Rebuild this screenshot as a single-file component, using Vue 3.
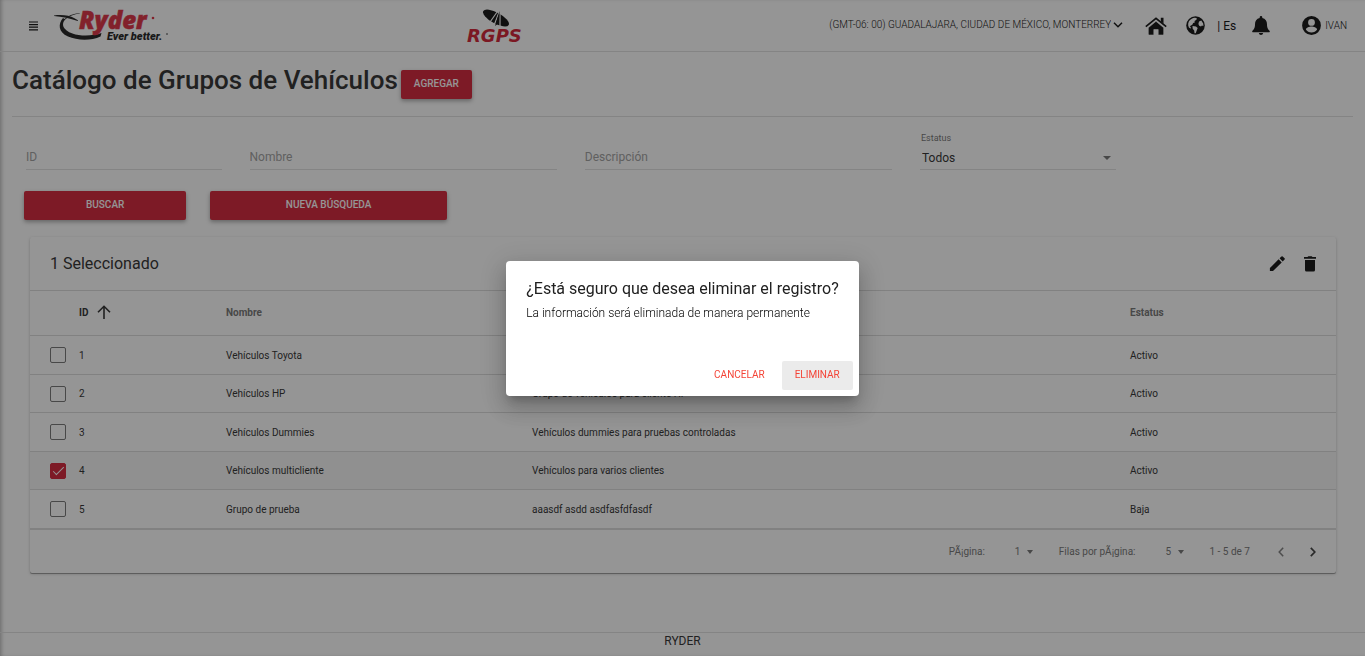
<script setup>
import { ref } from 'vue'

const rows = ref([
  { id: 1, name: 'Vehículos Toyota', description: 'Grupo de vehículos Toyota', status: 'Activo', selected: false },
  { id: 2, name: 'Vehículos HP', description: 'Grupo de vehículos para cliente HP', status: 'Activo', selected: false },
  { id: 3, name: 'Vehículos Dummies', description: 'Vehículos dummies para pruebas controladas', status: 'Activo', selected: false },
  { id: 4, name: 'Vehículos multicliente', description: 'Vehículos para varios clientes', status: 'Activo', selected: true },
  { id: 5, name: 'Grupo de prueba', description: 'aaasdf asdd asdfasfdfasdf', status: 'Baja', selected: false },
])
const filters = ref({ id: '', name: '', description: '' })
</script>

<template>
  <div class="page">
    <header class="topbar">
      <button class="icon-btn menu" aria-label="Menú">
        <svg width="10" height="10" viewBox="0 0 10 10"><path d="M0 1h9M0 3.600h9M0 6.200h9M0 8.800h9" stroke="#000" stroke-width="1.200" /></svg>
      </button>
      <svg class="ryder" width="118" height="34" viewBox="0 0 118 34" role="img" aria-label="Ryder Ever better">
        <path d="M0 6.500C8 5.500 16 6.500 20 9l4 2.200-.3.700C16 9.500 8 7.800 0 7z" fill="#111" />
        <path d="M26 4C19 4.500 14 6.500 10.500 10l-1.500-1C4 15 4 23 14 27.500c9 4 23 4.500 32.500 0l1-3.500c-8 3-21 3.500-29 .5C9 21 6.500 15 11.500 10.200 15 7 20 5.200 25.500 4.500z" fill="#111" />
        <text x="25" y="20" class="ryder-name">Ryder</text>
        <circle cx="99" cy="9" r="1.300" fill="#da2135" />
        <text x="53" y="31" class="ryder-tag">Ever better.</text>
        <path d="M112 25h2" stroke="#333" stroke-width="1" />
      </svg>
      <svg class="rgps" width="62" height="40" viewBox="0 -3 62 40" role="img" aria-label="RGPS">
        <ellipse cx="31" cy="9" rx="14.500" ry="5.500" transform="rotate(29 31 9)" fill="#000" />
        <path d="M33.500 1 24 14.500M34.500 2 29 16.500M35 2v15" stroke="#fff" stroke-width="1.200" fill="none" />
        <path d="M34.500 2 30 17l4-3z" fill="#000" />
        <text x="2" y="33" class="rgps-name">RGPS</text>
      </svg>
      <div class="tools">
        <div class="zone">
          <select aria-label="Zona horaria"><option>(GMT-06: 00) GUADALAJARA, CIUDAD DE MÉXICO, MONTERREY</option></select>
          <svg width="10" height="6" viewBox="0 0 10 6"><path d="M1 .8 5 4.800 9 .8" fill="none" stroke="#000" stroke-width="1.500" /></svg>
        </div>
        <a href="#" class="home" aria-label="Inicio">
          <svg width="22" height="18" viewBox="0 0 22 18"><path d="M11 4.300 3.300 10.700V17q0 1 1 1h4.500v-5.500h4.400V18h4.500q1 0 1-1v-6.300z" stroke="#fff" stroke-width=".6" /><path d="m.8 9.600L11 1.300l10.200 8.300" fill="none" stroke="#000" stroke-width="1.700" /><path d="M15.800.8h2.700v6l-2.700-2.200z" /></svg>
        </a>
        <a href="#" class="lang">
          <svg width="19" height="19" viewBox="0 0 19 19"><circle cx="9.500" cy="9.500" r="9.300" /><path d="M8.600 1.700 10.700 2l-.2 1.800-2 1.300.3 1.400-1.700.6-.6 1.500-1.500.8-1.300.9.500.3.800 1.500-.5.500-1.600-1C1.600 8.500 2 6 4 4c1.300-1.300 2.900-2 4.600-2.300z" fill="#fff" /><path d="M6.500 9.900 10 10.500l1.700 1.400-.8 2-1.200 3.300H8.500l-.3-2.700-1.500-1.800z" fill="#fff" /><path d="m13 5.600 2.300-1.100 1.900 3 .2 2.500-1.500-.4-.9 1-1.800-.9-.8-1.800z" fill="#fff" /></svg>
          <span>| Es</span>
        </a>
        <button class="icon-btn bell" aria-label="Notificaciones">
          <svg width="18" height="19" viewBox="0 0 18 19"><path d="M9 0q-1.300 0-1.300 1.300v.8C4.500 2.700 3 5.200 3 8.200c0 4-1.300 5.300-2.500 6.500-.7.700-.3 1.600.7 1.600h15.600c1 0 1.400-.9.700-1.600C16.300 13.500 15 12.200 15 8.200c0-3-1.500-5.500-4.700-6.100v-.8Q10.300 0 9 0zM6.800 17h4.400q-.4 1.900-2.200 1.900T6.800 17z" /></svg>
        </button>
        <button class="icon-btn user">
          <svg width="19" height="19" viewBox="0 0 19 19"><path fill-rule="evenodd" d="M9.500.1a9.400 9.400 0 1 0 0 18.800 9.400 9.400 0 0 0 0-18.800zm0 2.900a3.400 3.400 0 1 1 0 6.800 3.400 3.400 0 0 1 0-6.800zm0 13.400c-2.400 0-4.400-1.200-5.600-3 .1-1.900 3.700-2.900 5.600-2.900s5.500 1 5.600 2.900c-1.200 1.800-3.200 3-5.600 3z" /></svg>
          <span>IVAN</span>
        </button>
      </div>
    </header>

    <main>
      <div class="heading">
        <h1>Catálogo de Grupos de Vehículos</h1>
        <button class="btn raised">AGREGAR</button>
      </div>

      <form @submit.prevent>
        <div class="fields">
          <div class="field"><input id="f-id" v-model="filters.id" type="text" placeholder="ID" aria-label="ID" /></div>
          <div class="field"><input id="f-name" v-model="filters.name" type="text" placeholder="Nombre" aria-label="Nombre" /></div>
          <div class="field"><input id="f-desc" v-model="filters.description" type="text" placeholder="Descripción" aria-label="Descripción" /></div>
          <div class="field">
            <label for="f-status">Estatus</label>
            <div class="pick">
              <select id="f-status"><option>Todos</option></select>
              <svg width="8" height="4" viewBox="0 0 8 4"><path d="M0 0h8L4 4z" /></svg>
            </div>
          </div>
        </div>
        <div class="actions">
          <div><button class="btn raised" type="submit">BUSCAR</button></div>
          <div><button class="btn raised" type="reset">NUEVA BÚSQUEDA</button></div>
        </div>
      </form>

      <section class="card">
        <div class="card-bar">
          <h2>1 Seleccionado</h2>
          <button class="icon-btn" aria-label="Editar">
            <svg width="16" height="16" viewBox="0 0 18 18"><path d="M1 13.500V17h3.500L14.300 7.200l-3.500-3.500zM17.500 4a1 1 0 0 0 0-1.400L15.400.5a1 1 0 0 0-1.400 0l-2.100 2.100 3.500 3.500z" /></svg>
          </button>
          <button class="icon-btn" aria-label="Eliminar registro">
            <svg width="12" height="16" viewBox="0 0 12 16"><path d="M1 4h10v10q0 1.500-1.500 1.500h-7Q1 15.500 1 14zM0 1h3.500l.8-.8h3.400l.8.800H12v1.800H0z" /></svg>
          </button>
        </div>
        <table>
          <colgroup><col class="c-check" /><col class="c-id" /><col class="c-name" /><col class="c-desc" /><col /></colgroup>
          <thead>
            <tr>
              <th></th>
              <th class="sorted"><span>ID<svg width="14" height="14" viewBox="0 0 14 14"><path d="M7 14V1.300M1 7.300l6-6 6 6" fill="none" stroke="#212121" stroke-width="1.600" /></svg></span></th>
              <th>Nombre</th>
              <th>Descripción</th>
              <th>Estatus</th>
            </tr>
          </thead>
          <tbody>
            <tr v-for="row in rows" :key="row.id" :class="{ selected: row.selected }">
              <td><input v-model="row.selected" type="checkbox" :aria-label="'Seleccionar ' + row.name" /></td>
              <td>{{ row.id }}</td>
              <td>{{ row.name }}</td>
              <td>{{ row.description }}</td>
              <td>{{ row.status }}</td>
            </tr>
          </tbody>
        </table>
        <div class="pager">
          <label for="p-page">PÃ¡gina:</label>
          <div class="mini">
            <select id="p-page"><option>1</option></select>
            <svg width="6" height="4" viewBox="0 0 6 4"><path d="M0 0h6L3 4z" /></svg>
          </div>
          <label for="p-rows">Filas por pÃ¡gina:</label>
          <div class="mini">
            <select id="p-rows"><option>5</option></select>
            <svg width="6" height="4" viewBox="0 0 6 4"><path d="M0 0h6L3 4z" /></svg>
          </div>
          <span class="range">1 - 5 de 7</span>
          <button class="icon-btn prev" aria-label="Anterior"><svg width="6" height="10" viewBox="0 0 6 10"><path d="M5.200.8 1.200 5l4 4.200" /></svg></button>
          <button class="icon-btn next" aria-label="Siguiente"><svg width="6" height="10" viewBox="0 0 6 10"><path d="M.8.800 4.800 5l-4 4.200" /></svg></button>
        </div>
      </section>
    </main>

    <footer>RYDER</footer>

    <div class="backdrop">
      <div class="dialog" role="dialog" aria-modal="true" aria-labelledby="dlg-title">
        <h2 id="dlg-title">¿Está seguro que desea eliminar el registro?</h2>
        <p>La información será eliminada de manera permanente</p>
        <div class="dialog-actions">
          <button class="btn flat">CANCELAR</button>
          <button class="btn flat focused">ELIMINAR</button>
        </div>
      </div>
    </div>
  </div>
</template>

<style>
html, body { background: #fff; }
</style>

<style scoped>
.page {
  min-height: 100vh;
  box-sizing: border-box;
  display: flex;
  flex-direction: column;
  font-family: Roboto, "Liberation Sans", sans-serif;
  font-size: 10px;
  color: #212121;
  background: #fff;
  box-shadow: inset 3px 0 4px -2px rgba(0, 0, 0, 0.35);
}
button, select, input { font-family: inherit; font-size: inherit; font-weight: inherit; color: inherit; }
select { appearance: none; border: 0; padding: 0; background: transparent; outline: none; }
h1, h2, p { margin: 0; }
a { color: #000; text-decoration: none; }
svg { display: block; flex: none; overflow: visible; }
.icon-btn { border: 0; padding: 0; background: none; display: flex; align-items: center; }

.topbar {
  display: flex;
  align-items: center;
  height: 51px;
  border-bottom: 1px solid #dfdfdf;
  padding: 0 18px 0 29px;
}
.ryder { margin-left: 15px; }
.ryder-name { font: italic 800 24px "Open Sans", sans-serif; fill: #da2135; stroke: #da2135; stroke-width: 0.5px; }
.ryder-tag { font: italic 900 11px Roboto, sans-serif; fill: #111; }
.rgps { margin-left: 293px; }
.rgps-name { font: italic bold 18px "DejaVu Sans", sans-serif; fill: #ce1126; }
.tools { margin-left: auto; display: flex; align-items: center; color: #000; }
.zone { display: flex; align-items: center; gap: 2px; padding-bottom: 2px; font-weight: 300; }
.zone select { height: 20px; line-height: 20px; }
.home { margin-left: 22px; }
.lang { margin-left: 19px; display: flex; align-items: center; gap: 12px; font-size: 12px; }
.bell { margin-left: 16px; }
.user { margin-left: 32px; gap: 4px; font-weight: 300; }

main { padding: 0 12px; }
.heading {
  display: flex;
  align-items: center;
  gap: 3px;
  height: 64px;
  border-bottom: 1px solid #dfdfdf;
}
h1 { font-size: 26px; font-weight: 500; line-height: 56px; height: 64px; }
.btn {
  height: 29px;
  border: 0;
  border-radius: 2px;
  padding: 0 13px 2px;
  font-size: 10px;
}
.raised { background: #d2142b; color: #fff; font-weight: 500; box-shadow: 0 2px 4px rgba(0, 0, 0, 0.36); }

.fields { display: grid; grid-template-columns: 2fr 3fr 3fr 2fr 2fr; }
.field { padding: 14px 14px 0; height: 39px; display: flex; flex-direction: column; justify-content: flex-end; }
.field input, .pick {
  box-sizing: border-box;
  width: 100%;
  height: 24px;
  border: 0;
  border-bottom: 1px solid #dfdfdf;
  padding: 0 0 2px;
  font-size: 12px;
  background: transparent;
  outline: none;
}
.field input::placeholder { color: #999; opacity: 1; }
.field label { font-size: 9px; line-height: 12px; color: #6b6b6b; padding-left: 1px; margin-bottom: 2px; }
.field .pick { display: flex; align-items: center; padding: 0 5px 0 2px; }
.pick select { flex: 1; font-size: 12px; }
.pick svg, .mini svg { fill: #6b6b6b; }
.actions { display: grid; grid-template-columns: 5fr 7fr 24fr; padding-top: 21px; }
.actions div { padding: 0 12px; }
.actions .btn { width: 100%; }

.card {
  margin: 17px 17px 0 18px;
  border-radius: 2px;
  box-shadow: 0 1px 3px rgba(0, 0, 0, 0.25), 0 1px 0 rgba(0, 0, 0, 0.3);
}
.card-bar {
  display: flex;
  align-items: center;
  gap: 19px;
  height: 53px;
  padding: 0 20px;
}
.card-bar h2 { flex: 1; font-size: 16px; font-weight: 400; }
table { width: 100%; border-collapse: separate; border-spacing: 0; table-layout: fixed; }
.c-check { width: 49px; }
.c-id { width: 147px; }
.c-name { width: 306px; }
.c-desc { width: 598px; }
th, td { box-sizing: border-box; text-align: left; padding: 0; border-top: 1px solid #d8d8d8; }
th { height: 45px; font-weight: 700; color: #6b6b6b; padding-bottom: 2px; }
.sorted { color: #212121; }
.sorted span { display: flex; align-items: center; gap: 9px; }
td { height: 38px; }
tbody tr:nth-child(odd) td { height: 39px; }
td:first-child { padding-left: 20px; }
.selected td { background: #f5f5f5; }
td input {
  appearance: none;
  display: block;
  box-sizing: border-box;
  width: 16px;
  height: 16px;
  margin: 0;
  border: 1px solid #6b6b6b;
  border-radius: 2px;
}
td input:checked { background: #d2142b; border-color: #d2142b; }
td input:checked::after {
  content: "";
  display: block;
  box-sizing: border-box;
  width: 5px;
  height: 11px;
  margin: 0 0 0 5px;
  border: solid #fff;
  border-width: 0 1px 1px 0;
  transform: rotate(45deg);
}
.pager {
  display: flex;
  align-items: center;
  justify-content: flex-end;
  height: 43px;
  padding: 0 20px;
  border-top: 2px solid #d8d8d8;
  color: #6b6b6b;
}
.pager label, .range { white-space: nowrap; }
.pager label { margin-right: 30px; }
.mini { display: flex; align-items: center; gap: 6px; margin-right: 26px; }
.prev { margin: 0 26px 0 28px; }
.pager path { fill: none; }
.pager .mini path { fill: #6b6b6b; }
.prev path { stroke: #757575; stroke-width: 1.5; }
.next path { stroke: #333; stroke-width: 1.7; }

footer {
  margin-top: auto;
  height: 23px;
  border-top: 1px solid #dfdfdf;
  font-size: 12px;
  line-height: 16px;
  text-align: center;
}

.backdrop {
  position: fixed;
  inset: 0;
  display: flex;
  align-items: center;
  justify-content: center;
  background: rgba(33, 33, 33, 0.48);
}
.dialog {
  box-sizing: border-box;
  background: #fff;
  border-radius: 4px;
  box-shadow: 0 7px 8px -4px rgba(0, 0, 0, 0.2), 0 13px 19px 2px rgba(0, 0, 0, 0.14), 0 5px 24px 4px rgba(0, 0, 0, 0.12);
}
.dialog h2 { padding: 18px 20px 0; font-size: 16px; line-height: 20px; font-weight: 400; }
.dialog p { padding: 6px 20px 0; font-size: 12px; line-height: 16px; font-weight: 300; color: #000; }
.dialog-actions { display: flex; justify-content: flex-end; gap: 4px; padding: 40px 6px 6px; }
.flat { background: transparent; color: #f44336; font-weight: 400; }
.focused { background: #ebebeb; }
</style>
